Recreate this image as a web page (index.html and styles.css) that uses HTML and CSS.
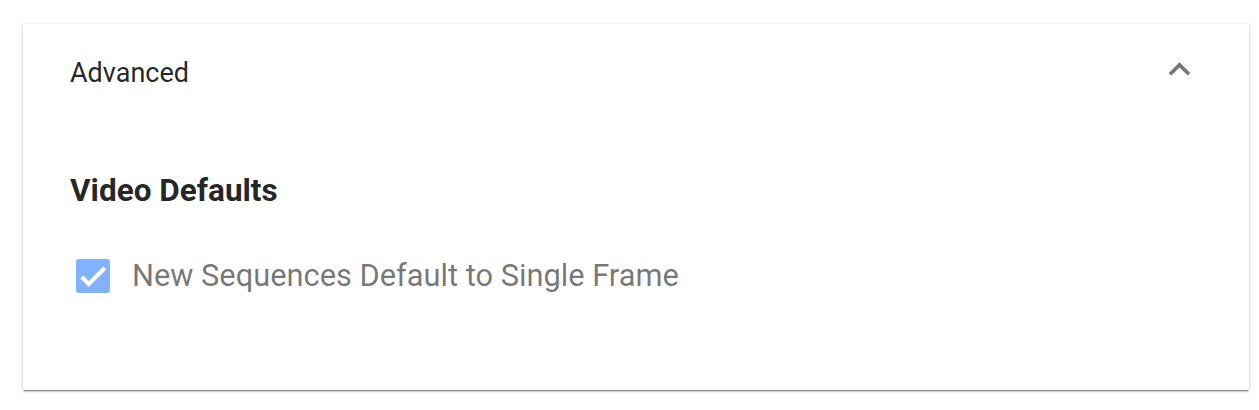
FILE: index.html
```html
<!DOCTYPE html>
<html>
<head>
<meta charset="utf-8">
<link rel="stylesheet" href="styles.css">
</head>
<body>
<div class="panel">
  <div class="panel-header">
    <span class="panel-title">Advanced</span>
    <svg class="chevron" viewBox="0 0 24 24" width="43" height="43"><path d="M12 8l-6 6 1.41 1.41L12 10.83l4.59 4.58L18 14z" fill="#757575"/></svg>
  </div>
  <div class="panel-body">
    <div class="section-title">Video Defaults</div>
    <label class="check-row">
      <span class="checkbox">
        <svg viewBox="0 0 24 24" width="34" height="34"><path d="M4.1 12.7L9 17.6L20.3 6.3" fill="none" stroke="#fff" stroke-width="3"/></svg>
      </span>
      <span class="check-label">New Sequences Default to Single Frame</span>
    </label>
  </div>
</div>
</body>
</html>
```

FILE: styles.css
```css
html, body {
  margin: 0;
  padding: 0;
  background: #fff;
}
body {
  font-family: Roboto, "Noto Sans", sans-serif;
  padding-top: 24px;
  height: 410px;
  box-sizing: border-box;
}
.panel {
  margin: 0 0 0 23px;
  width: 1226px;
  height: 366px;
  background: #fff;
  box-shadow: 0 2px 1px -1px rgba(0,0,0,.35), 0 1px 2px 0 rgba(0,0,0,.2), 0 1px 5px 0 rgba(0,0,0,.1);
  box-sizing: border-box;
  display: flex;
  flex-direction: column;
}
.panel-header {
  height: 97px;
  flex: none;
  display: flex;
  align-items: center;
  justify-content: space-between;
  padding: 0 48px 0 47px;
}
.panel-title {
  font-size: 27px;
  color: rgba(0,0,0,.87);
}
.chevron {
  display: block;
  margin-top: -6px;
}
.panel-body {
  padding: 51px 47px 0 47px;
}
.section-title {
  font-size: 31.5px;
  font-weight: 700;
  color: rgba(0,0,0,.87);
  line-height: 38px;
}
.check-row {
  display: flex;
  align-items: center;
  margin-top: 47px;
  margin-left: 6px;
}
.checkbox {
  width: 34px;
  height: 34px;
  border-radius: 3px;
  background: #82b1ff;
  display: flex;
  align-items: center;
  justify-content: center;
}
.checkbox svg {
  display: block;
}
.check-label {
  margin-left: 22px;
  font-size: 30.8px;
  color: rgba(0,0,0,.54);
}
```
